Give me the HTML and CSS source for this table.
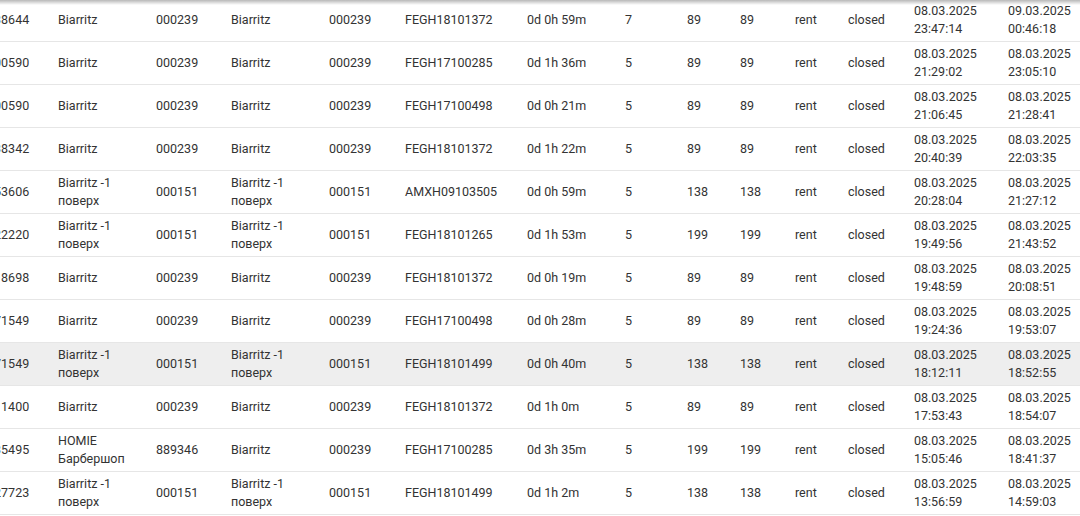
FILE: index.html
```html
<!DOCTYPE html>
<html lang="en">
<head>
<meta charset="utf-8">
<title>Rentals</title>
<link rel="stylesheet" href="styles.css">
</head>
<body>
<div class="viewport">
  <div class="header-shadow"></div>
  <div class="table">
    <div class="row"><div class="cell">2138644</div><div class="cell">Biarritz</div><div class="cell">000239</div><div class="cell">Biarritz</div><div class="cell">000239</div><div class="cell">FEGH18101372</div><div class="cell">0d 0h 59m</div><div class="cell">7</div><div class="cell">89</div><div class="cell">89</div><div class="cell">rent</div><div class="cell">closed</div><div class="cell">08.03.2025 23:47:14</div><div class="cell">09.03.2025 00:46:18</div></div>
    <div class="row"><div class="cell">2100590</div><div class="cell">Biarritz</div><div class="cell">000239</div><div class="cell">Biarritz</div><div class="cell">000239</div><div class="cell">FEGH17100285</div><div class="cell">0d 1h 36m</div><div class="cell">5</div><div class="cell">89</div><div class="cell">89</div><div class="cell">rent</div><div class="cell">closed</div><div class="cell">08.03.2025 21:29:02</div><div class="cell">08.03.2025 23:05:10</div></div>
    <div class="row"><div class="cell">2100590</div><div class="cell">Biarritz</div><div class="cell">000239</div><div class="cell">Biarritz</div><div class="cell">000239</div><div class="cell">FEGH17100498</div><div class="cell">0d 0h 21m</div><div class="cell">5</div><div class="cell">89</div><div class="cell">89</div><div class="cell">rent</div><div class="cell">closed</div><div class="cell">08.03.2025 21:06:45</div><div class="cell">08.03.2025 21:28:41</div></div>
    <div class="row"><div class="cell">2138342</div><div class="cell">Biarritz</div><div class="cell">000239</div><div class="cell">Biarritz</div><div class="cell">000239</div><div class="cell">FEGH18101372</div><div class="cell">0d 1h 22m</div><div class="cell">5</div><div class="cell">89</div><div class="cell">89</div><div class="cell">rent</div><div class="cell">closed</div><div class="cell">08.03.2025 20:40:39</div><div class="cell">08.03.2025 22:03:35</div></div>
    <div class="row"><div class="cell">2153606</div><div class="cell">Biarritz -1 поверх</div><div class="cell">000151</div><div class="cell">Biarritz -1 поверх</div><div class="cell">000151</div><div class="cell">AMXH09103505</div><div class="cell">0d 0h 59m</div><div class="cell">5</div><div class="cell">138</div><div class="cell">138</div><div class="cell">rent</div><div class="cell">closed</div><div class="cell">08.03.2025 20:28:04</div><div class="cell">08.03.2025 21:27:12</div></div>
    <div class="row"><div class="cell">2122220</div><div class="cell">Biarritz -1 поверх</div><div class="cell">000151</div><div class="cell">Biarritz -1 поверх</div><div class="cell">000151</div><div class="cell">FEGH18101265</div><div class="cell">0d 1h 53m</div><div class="cell">5</div><div class="cell">199</div><div class="cell">199</div><div class="cell">rent</div><div class="cell">closed</div><div class="cell">08.03.2025 19:49:56</div><div class="cell">08.03.2025 21:43:52</div></div>
    <div class="row"><div class="cell">2118698</div><div class="cell">Biarritz</div><div class="cell">000239</div><div class="cell">Biarritz</div><div class="cell">000239</div><div class="cell">FEGH18101372</div><div class="cell">0d 0h 19m</div><div class="cell">5</div><div class="cell">89</div><div class="cell">89</div><div class="cell">rent</div><div class="cell">closed</div><div class="cell">08.03.2025 19:48:59</div><div class="cell">08.03.2025 20:08:51</div></div>
    <div class="row"><div class="cell">2171549</div><div class="cell">Biarritz</div><div class="cell">000239</div><div class="cell">Biarritz</div><div class="cell">000239</div><div class="cell">FEGH17100498</div><div class="cell">0d 0h 28m</div><div class="cell">5</div><div class="cell">89</div><div class="cell">89</div><div class="cell">rent</div><div class="cell">closed</div><div class="cell">08.03.2025 19:24:36</div><div class="cell">08.03.2025 19:53:07</div></div>
    <div class="row row-hover"><div class="cell">2171549</div><div class="cell">Biarritz -1 поверх</div><div class="cell">000151</div><div class="cell">Biarritz -1 поверх</div><div class="cell">000151</div><div class="cell">FEGH18101499</div><div class="cell">0d 0h 40m</div><div class="cell">5</div><div class="cell">138</div><div class="cell">138</div><div class="cell">rent</div><div class="cell">closed</div><div class="cell">08.03.2025 18:12:11</div><div class="cell">08.03.2025 18:52:55</div></div>
    <div class="row"><div class="cell">2111400</div><div class="cell">Biarritz</div><div class="cell">000239</div><div class="cell">Biarritz</div><div class="cell">000239</div><div class="cell">FEGH18101372</div><div class="cell">0d 1h 0m</div><div class="cell">5</div><div class="cell">89</div><div class="cell">89</div><div class="cell">rent</div><div class="cell">closed</div><div class="cell">08.03.2025 17:53:43</div><div class="cell">08.03.2025 18:54:07</div></div>
    <div class="row"><div class="cell">2135495</div><div class="cell">HOMIE Барбершоп</div><div class="cell">889346</div><div class="cell">Biarritz</div><div class="cell">000239</div><div class="cell">FEGH17100285</div><div class="cell">0d 3h 35m</div><div class="cell">5</div><div class="cell">199</div><div class="cell">199</div><div class="cell">rent</div><div class="cell">closed</div><div class="cell">08.03.2025 15:05:46</div><div class="cell">08.03.2025 18:41:37</div></div>
    <div class="row"><div class="cell">2127723</div><div class="cell">Biarritz -1 поверх</div><div class="cell">000151</div><div class="cell">Biarritz -1 поверх</div><div class="cell">000151</div><div class="cell">FEGH18101499</div><div class="cell">0d 1h 2m</div><div class="cell">5</div><div class="cell">138</div><div class="cell">138</div><div class="cell">rent</div><div class="cell">closed</div><div class="cell">08.03.2025 13:56:59</div><div class="cell">08.03.2025 14:59:03</div></div>
  </div>
</div>
</body>
</html>
```

FILE: styles.css
```css
html, body {
  margin: 0;
  padding: 0;
  background: #ffffff;
}

body {
  font-family: Roboto, "Noto Sans", "Liberation Sans", sans-serif;
  font-size: 12.5px;
  line-height: 18.5px;
  color: #333333;
}

.viewport {
  position: relative;
  width: 1080px;
  height: 516px;
  overflow: hidden;
}

.header-shadow {
  position: absolute;
  top: 0;
  left: 0;
  right: 0;
  height: 5px;
  background: linear-gradient(to bottom, rgba(0, 0, 0, 0.28), rgba(0, 0, 0, 0));
  z-index: 2;
}

.table {
  margin-left: -28px;
  margin-top: -1px;
  width: max-content;
}

.row {
  display: grid;
  grid-template-columns: 78px 98px 75px 98px 76px 122px 98px 62px 53px 55px 53px 66px 94px 94px;
  height: 43px;
  box-sizing: border-box;
  border-bottom: 1px solid #e6e6e6;
  align-items: center;
}

.row-hover {
  background: #eeeeee;
}

.cell {
  padding: 0 8px;
}
```
